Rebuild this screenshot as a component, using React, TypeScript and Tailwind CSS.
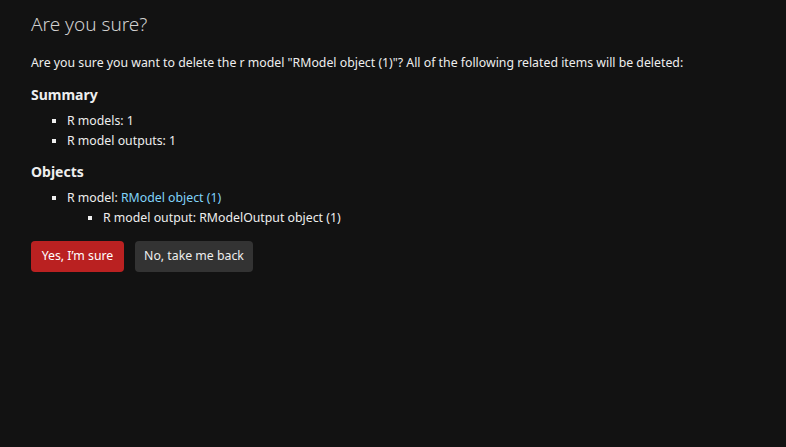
export default function App() {
  const font = { fontFamily: '"Noto Sans", "Open Sans", sans-serif' };
  return (
    <div className="min-h-screen w-full bg-[#121212] text-[#eeeeee]" style={font}>
      <div className="px-[31px] pt-[12px] flex flex-col">
        <h1 className="text-[19px] leading-[24px] font-light text-[#d0d0d0]">Are you sure?</h1>

        <p className="mt-[18px] text-[12.3px] leading-[18px]">
          Are you sure you want to delete the r model "RModel object (1)"? All of the following related items will be deleted:
        </p>

        <h2 className="mt-[13px] text-[14px] leading-[20px] font-bold">Summary</h2>
        <ul className="mt-[6px] ml-[22px] list-[square] pl-[14px] text-[12.3px] leading-[20px]">
          <li>R models: 1</li>
          <li>R model outputs: 1</li>
        </ul>

        <h2 className="mt-[11px] text-[14px] leading-[20px] font-bold">Objects</h2>
        <ul className="mt-[6px] ml-[22px] list-[square] pl-[14px] text-[12.3px] leading-[20px]">
          <li>
            R model: <a className="text-[#81d4fa]">RModel object (1)</a>
            <ul className="ml-[22px] list-[square] pl-[14px]">
              <li>R model output: RModelOutput object (1)</li>
            </ul>
          </li>
        </ul>

        <div className="mt-[13px] flex gap-[11px]">
          <button className="h-[31px] w-[93px] rounded-[4px] bg-[#ba2121] text-[12.3px] text-white">
            Yes, I’m sure
          </button>
          <button className="h-[31px] w-[118px] rounded-[4px] bg-[#333333] text-[12.3px] text-[#eeeeee]">
            No, take me back
          </button>
        </div>
      </div>
    </div>
  );
}
